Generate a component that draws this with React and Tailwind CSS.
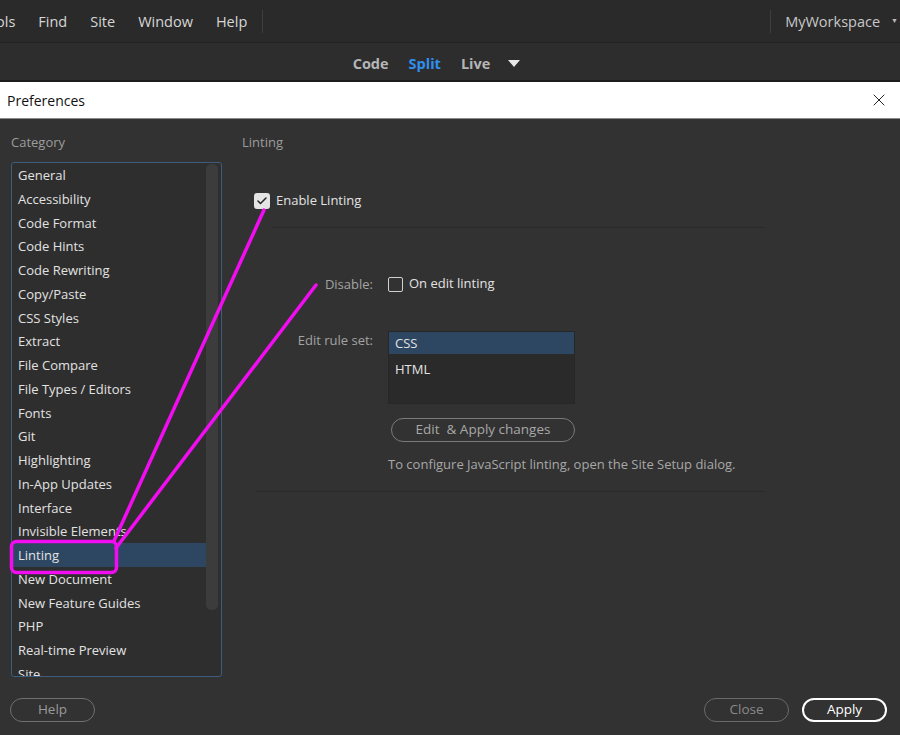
import { X, Check } from 'lucide-react'

const CATEGORIES = [
  'General', 'Accessibility', 'Code Format', 'Code Hints', 'Code Rewriting',
  'Copy/Paste', 'CSS Styles', 'Extract', 'File Compare', 'File Types / Editors',
  'Fonts', 'Git', 'Highlighting', 'In-App Updates', 'Interface',
  'Invisible Elements', 'Linting', 'New Document', 'New Feature Guides', 'PHP',
  'Real-time Preview', 'Site',
]

const MENU = ['ols', 'Find', 'Site', 'Window', 'Help']

function Pill({ children, className = '' }) {
  return (
    <button className={'h-[24px] rounded-full text-[13.5px] leading-none ' + className}>
      {children}
    </button>
  )
}

export default function App() {
  return (
    <div
      className="relative w-[900px] h-[735px] overflow-hidden flex flex-col bg-[#323232]"
      style={{ fontFamily: '"Open Sans", "Noto Sans", sans-serif' }}
    >
      {/* Menu bar */}
      <div className="h-[43px] shrink-0 flex items-center bg-[#2a2a2a] border-b border-[#222] text-[14.5px] text-[#d6d6d6] pt-[1px]">
        <div className="flex items-center gap-[23px] -ml-[4px]">
          {MENU.map((m) => (
            <span key={m}>{m}</span>
          ))}
        </div>
        <div className="ml-[15px] w-px h-[23px] bg-[#3e3e3e]" />
        <div className="flex-1" />
        <div className="w-px h-[23px] bg-[#3e3e3e]" />
        <span className="ml-[14px] text-[#c8c8c8]">MyWorkspace</span>
        <span className="ml-[11px] mr-[2px] text-[7px] text-[#bbb]">▼</span>
      </div>

      {/* View switcher */}
      <div className="h-[39px] shrink-0 flex items-center justify-center gap-[20px] bg-[#2d2d2d] border-b-2 border-[#1c1c1c] text-[14.5px] font-bold text-[#b5b5b5] pr-[27px] pt-[4px]">
        <span>Code</span>
        <span className="text-[#2f8ff0]">Split</span>
        <span>Live</span>
        <svg width="12" height="8" viewBox="0 0 12 8" className="-ml-[2px]">
          <path d="M0 0 L12 0 L6 7 Z" fill="#e8e8e8" />
        </svg>
      </div>

      {/* Dialog title */}
      <div className="h-[37px] shrink-0 flex items-center justify-between bg-white border-b border-[#8a8a8a] pl-[7px] pr-[11px] text-[14px] text-[#111]">
        <span>Preferences</span>
        <X size={20} strokeWidth={1.2} className="text-[#222]" />
      </div>

      {/* Dialog body */}
      <div className="flex-1 flex flex-col px-[10px] pt-[12px] text-[13px]">
        <div className="flex">
          {/* Category list */}
          <div className="w-[212px] shrink-0 pl-[1px]">
            <div className="h-[20px] leading-[20px] pt-[1px] text-[#9c9c9c]">Category</div>
            <div className="mt-[11px] h-[515px] w-[211px] border border-[#3e5d7e] rounded-[3px] bg-[#2e2e2e] flex overflow-hidden">
              <div className="flex-1 flex flex-col">
                {CATEGORIES.map((c) => (
                  <div
                    key={c}
                    className={
                      'h-[23.75px] shrink-0 flex items-center pl-[6px] pt-[2px] text-[#e2e2e2] ' +
                      (c === 'Linting' ? 'bg-[#2d4762]' : '')
                    }
                  >
                    {c}
                  </div>
                ))}
              </div>
              <div className="w-[15px] shrink-0 pt-[1px] pr-[3px]">
                <div className="h-[446px] w-[12px] rounded-[5px] bg-[#3c3c3c]" />
              </div>
            </div>
          </div>

          {/* Linting pane */}
          <div className="flex-1 pl-[20px]">
            <div className="h-[20px] leading-[20px] pt-[1px] text-[#9c9c9c]">Linting</div>

            <div className="mt-[40px] ml-[12px] flex items-center gap-[6px] h-[20px]">
              <span className="w-[16px] h-[16px] rounded-[3px] bg-[#e4e4e4] flex items-center justify-center">
                <Check size={12} strokeWidth={3} className="text-[#222]" />
              </span>
              <span className="text-[#e2e2e2]">Enable Linting</span>
            </div>

            <div className="mt-[16px] ml-[30px] w-[493px] h-px bg-[#2a2a2a]" />

            <div className="mt-[46px] grid grid-cols-[131px_1fr] gap-x-[15px]">
              <div className="h-[20px] leading-[20px] text-right text-[#a3a3a3]">Disable:</div>
              <div className="h-[20px] flex items-center gap-[6px]">
                <span className="w-[15px] h-[15px] rounded-[2px] border border-[#d0d0d0]" />
                <span className="text-[#e2e2e2]">On edit linting</span>
              </div>

              <div className="mt-[36px] h-[20px] leading-[20px] text-right text-[#a3a3a3]">Edit rule set:</div>
              <div className="mt-[37px]">
                <div className="w-[187px] h-[73px] bg-[#2a2a2a] border border-[#272727] flex flex-col">
                  <div className="h-[22px] pl-[6px] pt-[2px] flex items-center bg-[#2d4762] text-[#e2e2e2]">CSS</div>
                  <div className="h-[26px] pl-[6px] flex items-center text-[#e2e2e2] pt-[5px]">HTML</div>
                </div>
                <Pill className="mt-[14px] ml-[3px] w-[184px] border border-[#7a7a7a] text-[#a8a8a8]">
                  Edit&nbsp; &amp; Apply changes
                </Pill>
                <div className="mt-[12px] h-[20px] leading-[20px] text-[#a8a8a8]">
                  To configure JavaScript linting, open the Site Setup dialog.
                </div>
              </div>
            </div>

            <div className="mt-[17px] ml-[13px] w-[510px] h-px bg-[#2a2a2a]" />
          </div>
        </div>

        {/* Footer buttons */}
        <div className="mt-[21px] flex items-center">
          <Pill className="w-[85px] border border-[#707070] text-[#9a9a9a]">Help</Pill>
          <div className="flex-1" />
          <Pill className="w-[85px] border border-[#6a6a6a] text-[#8a8a8a]">Close</Pill>
          <Pill className="ml-[13px] w-[85px] border-2 border-white text-white">Apply</Pill>
          <div className="w-[3px]" />
        </div>
      </div>

      {/* Magenta annotation overlay */}
      <svg className="absolute inset-0 pointer-events-none" width="900" height="735">
        <g stroke="#f20cf2" strokeWidth="3.5" strokeLinecap="round" fill="none">
          <line x1="264" y1="210" x2="114" y2="541" />
          <line x1="316" y1="285" x2="116" y2="548" />
          <rect x="11.5" y="541.5" width="105" height="31" rx="5" />
        </g>
      </svg>
    </div>
  )
}
